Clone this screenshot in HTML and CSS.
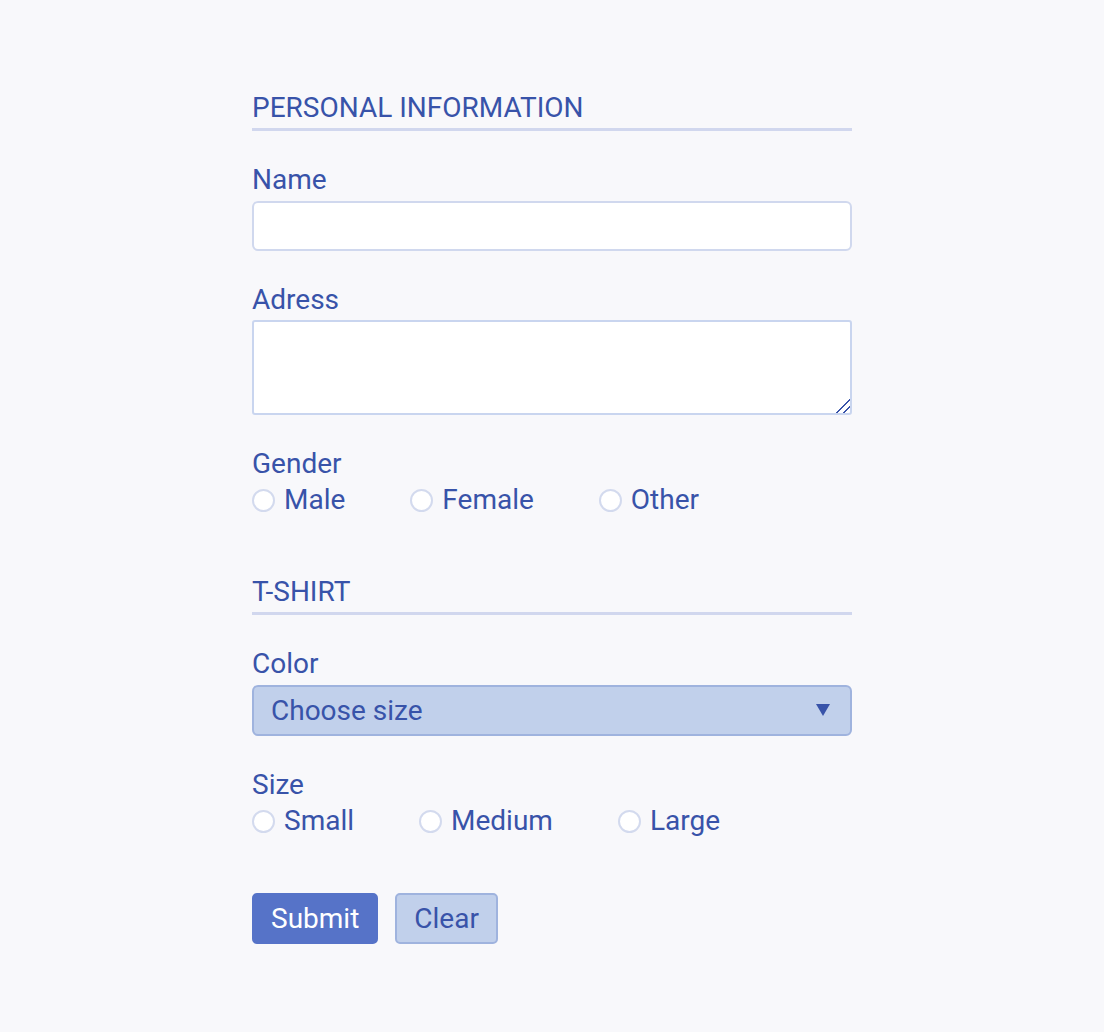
FILE: index.html
```html
<!DOCTYPE html>
<html lang="en">
<head>
  <meta charset="UTF-8" />
  <meta name="viewport" content="width=device-width, initial-scale=1.0"/>
  <title>T-Shirt Order</title>
  <link rel="stylesheet" href="styles.css">
</head>
<body>
  <form class="order-form">
    <section class="section">
      <h2 class="section-title">Personal information</h2>

      <div class="field">
        <label class="field-label" for="name">Name</label>
        <input class="text-input" type="text" id="name" />
      </div>

      <div class="field">
        <label class="field-label" for="address">Adress</label>
        <textarea class="text-area" id="address"></textarea>
      </div>

      <div class="field">
        <span class="field-label">Gender</span>
        <div class="radio-group">
          <label class="radio"><input type="radio" name="gender" value="male" />Male</label>
          <label class="radio"><input type="radio" name="gender" value="female" />Female</label>
          <label class="radio"><input type="radio" name="gender" value="other" />Other</label>
        </div>
      </div>
    </section>

    <section class="section">
      <h2 class="section-title">T-Shirt</h2>

      <div class="field">
        <label class="field-label" for="color">Color</label>
        <div class="select-wrap">
          <select class="select" id="color">
            <option>Choose size</option>
          </select>
          <svg class="select-arrow" width="14" height="12" viewBox="0 0 14 12">
            <path d="M0 0 H14 L7 12 Z" fill="#3853a9"/>
          </svg>
        </div>
      </div>

      <div class="field">
        <span class="field-label">Size</span>
        <div class="radio-group">
          <label class="radio"><input type="radio" name="size" value="small" />Small</label>
          <label class="radio"><input type="radio" name="size" value="medium" />Medium</label>
          <label class="radio"><input type="radio" name="size" value="large" />Large</label>
        </div>
      </div>
    </section>

    <div class="actions">
      <button type="submit" class="btn btn-primary">Submit</button>
      <button type="reset" class="btn btn-secondary">Clear</button>
    </div>
  </form>
</body>
</html>
```

FILE: styles.css
```css
body {
  margin: 0;
  background-color: #f8f8fb;
  font-family: Roboto, "Liberation Sans", sans-serif;
  color: #3853a9;
}

.order-form {
  width: 600px;
  margin: 0 auto;
  padding: 92px 0 60px;
  font-size: 28px;
  line-height: 32px;
}

.section {
  margin-bottom: 60px;
}

.section-title {
  margin: 0 0 33px;
  padding-bottom: 4px;
  font-size: 28px;
  font-weight: normal;
  line-height: 32px;
  text-transform: uppercase;
  border-bottom: 3px solid #d1d7ee;
}

.field {
  margin-bottom: 33px;
}

.section .field:last-child {
  margin-bottom: 0;
}

.field-label {
  display: block;
  margin-bottom: 4px;
}

.field-label + .text-input,
.field-label + .select-wrap {
  margin-top: 5px;
}

.text-input,
.text-area {
  display: block;
  box-sizing: border-box;
  width: 100%;
  border: 2px solid #d0d8ee;
  background-color: white;
  font: inherit;
  color: inherit;
}

.text-input {
  height: 50px;
  padding: 0 16px;
  border-radius: 6px;
}

.text-area {
  height: 95px;
  padding: 8px 16px;
  border-radius: 3px;
  border-color: #c9d5ef;
  resize: vertical;
}

.text-area::-webkit-resizer {
  background:
    linear-gradient(135deg, transparent 52%, #3853a9 52%, #3853a9 60%, transparent 60%,
      transparent 74%, #3853a9 74%, #3853a9 82%, transparent 82%);
}

.radio-group {
  display: flex;
  gap: 65px;
}

.radio {
  display: flex;
  align-items: center;
}

.radio input {
  appearance: none;
  -webkit-appearance: none;
  width: 23px;
  height: 23px;
  margin: 0 9px 0 0;
  border: 2px solid #d3daee;
  border-radius: 50%;
  background-color: white;
}

.radio input:checked {
  background-color: #5673c8;
}

.select-wrap {
  position: relative;
}

.select {
  appearance: none;
  -webkit-appearance: none;
  display: block;
  box-sizing: border-box;
  width: 100%;
  height: 51px;
  padding: 0 50px 0 17px;
  border: 2px solid #9fb3de;
  border-radius: 6px;
  background-color: #c1d0eb;
  font: inherit;
  color: inherit;
}

.select-arrow {
  position: absolute;
  right: 22px;
  top: 19px;
  pointer-events: none;
}

.actions {
  display: flex;
  gap: 17px;
  margin-top: -4px;
}

.btn {
  padding: 8px 17px;
  border: 2px solid transparent;
  border-radius: 5px;
  font: inherit;
  line-height: 31px;
  cursor: pointer;
}

.btn-primary {
  background-color: #5673c8;
  border-color: #5673c8;
  color: white;
}

.btn-secondary {
  background-color: #c1d0eb;
  border-color: #9fb3de;
  color: #3853a9;
}
```
